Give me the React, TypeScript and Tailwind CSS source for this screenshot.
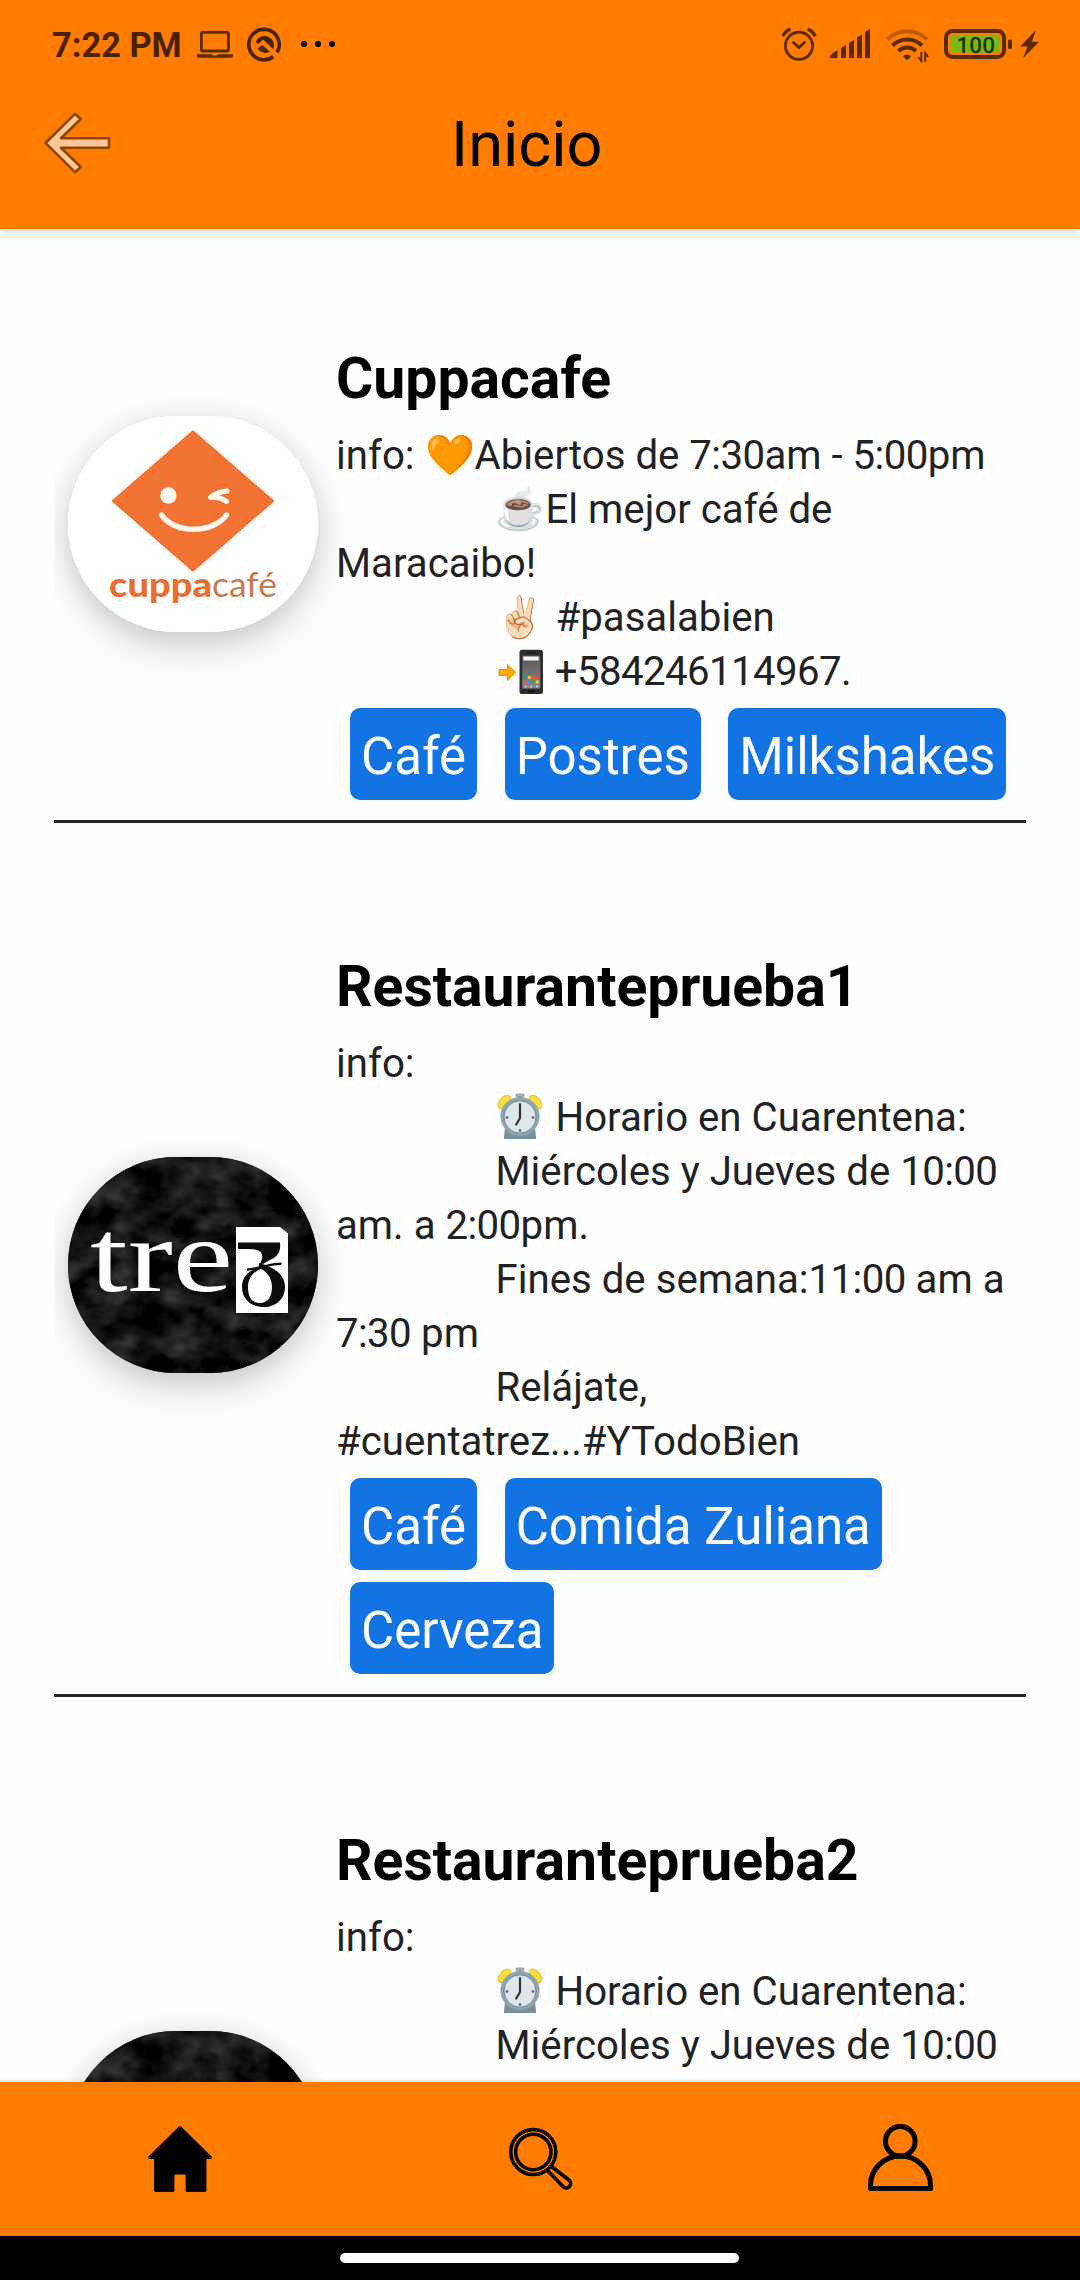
import type { ReactNode } from "react";

const INDENT = " ".repeat(16);

function StatusBar() {
  return (
    <div className="flex h-[88px] items-start justify-between pl-[52px] pr-[40px] text-[#4a2200]">
      <div className="flex items-start">
        <span className="mt-[25px] w-[145px] whitespace-nowrap text-[34.400px] font-bold leading-[40px]">7:22 PM</span>
        <svg className="mt-[26px] h-[36px] w-[150px]" viewBox="197 26 150 36" fill="none">
          <rect x="201.4" y="32.4" width="27" height="18.6" rx="1.5" stroke="#5a2a00" strokeWidth="2.8" />
          <path d="M197 54.2h14.5l1.5 1.2h4l1.5-1.2H233v2a1.6 1.6 0 0 1-1.6 1.6h-32.800a1.600 1.600 0 0 1-1.600-1.600z" fill="#5a2a00" />
          <path d="M273.200 56.700A15.200 15.200 0 1 1 277 52.500" stroke="#4a2200" strokeWidth="3.600" />
          <path d="M255.600 42a9.500 9.500 0 1 1 17.800 7.200l-10.400-9.700-4.500 4.500z" fill="#4a2200" />
          <path d="M257.500 48.500l4.500-3.500 8 6.800a9.500 9.500 0 0 1-12.500-3.300z" fill="#4a2200" />
          <g fill="#000">
            <circle cx="304" cy="44" r="3" />
            <circle cx="318" cy="44" r="3" />
            <circle cx="332" cy="44" r="3" />
          </g>
        </svg>
      </div>
      <svg className="mt-[26px] h-[38px] w-[260px]" viewBox="780 26 260 38" fill="none">
        <g stroke="#5a2a00" strokeWidth="2.800">
          <circle cx="799" cy="45.800" r="13.600" />
          <path d="M793.500 42.500l5.500 5 5.500-5" strokeLinecap="round" />
          <path d="M782.700 36.200q2.300-4.800 7.600-7.200M815.300 36.200q-2.300-4.800-7.600-7.200" strokeWidth="3.200" />
        </g>
        <path
          fill="#5a2a00"
          d="M830 58v-2.500l7.500-5.500v8zM841 58V48l5-3v13zM849 58V43l5-3v18zM857 58V37.500l5-3V58zM865 58V32l5-3v29z"
        />
        <path d="M887.500 39.500a28 28 0 0 1 39.500 0" stroke="#c05c00" strokeWidth="4" />
        <path d="M892.500 45.500a21 21 0 0 1 29.500 0M898.500 51a13 13 0 0 1 17.500 0" stroke="#5a2a00" strokeWidth="4" />
        <path d="M903 56.300q4-3.800 8.200 0l-4.100 3.900z" fill="#5a2a00" />
        <path d="M921.300 52v9l-3-4M925.200 62v-9l3 4" stroke="#5a2a00" strokeWidth="1.900" />
        <rect x="946" y="31" width="58" height="26" rx="6.500" stroke="#5a2a00" strokeWidth="4" />
        <rect x="950.500" y="35.700" width="49" height="16.800" rx="3" fill="#7cb80f" />
        <text x="956.500" y="52.800" fill="#1c3400" fontSize="22.500" fontWeight="500" textLength="38.500">100</text>
        <rect x="1008" y="39.500" width="4" height="9.500" rx="1.500" fill="#5a2a00" />
        <path d="M1036 30l-15.800 16.500h7.300L1023 58.300l16-16.500h-7.200z" fill="#5a2a00" />
      </svg>
    </div>
  );
}

function Header() {
  return (
    <header className="relative z-10 h-[229px] shrink-0 bg-[#ff7c00] shadow-[0_2px_10px_rgba(0,0,0,0.18)]">
      <StatusBar />
      <div className="flex h-[114px] items-center pl-[42px]">
        <svg className="-mt-1 h-[66px] w-[70px]" viewBox="42 110 70 66">
          <path
            d="M45.500 143L75 113.800L80.800 119L61 138.200H109V147.800H61L80.800 167L75 172.200Z"
            fill="#ffc796"
            stroke="#8c4700"
            strokeWidth="2.600"
            strokeLinejoin="round"
          />
        </svg>
        <h1 className="ml-[339px] text-[63px] leading-[74px] text-black">Inicio</h1>
      </div>
    </header>
  );
}

function CuppaLogo() {
  return (
    <svg className="h-[216px] w-[250px]" viewBox="0 0 250 216" fill="none">
      <rect width="250" height="216" fill="#fff" />
      <path d="M125 16l79.500 69L125 154 45.500 85z" fill="#f37334" stroke="#f37334" strokeWidth="3" strokeLinejoin="round" />
      <circle cx="100.500" cy="79.500" r="8.200" fill="#fffaf0" />
      <path d="M159 75q-10 1-16.500 6.500 9-1.500 16 4" stroke="#fffaf0" strokeWidth="5" strokeLinecap="round" strokeLinejoin="round" />
      <path d="M93.500 99c13 19 51 19 65 0" stroke="#fffaf0" strokeWidth="5.400" strokeLinecap="round" />
      <text x="41" y="180.500" fontFamily="Lato" fontSize="35" fontWeight="900" fill="#e66f31" textLength="103" lengthAdjust="spacingAndGlyphs">
        cuppa
      </text>
      <text x="144" y="180.500" fontFamily="Lato" fontSize="35" fill="#c97a4c" textLength="65" lengthAdjust="spacingAndGlyphs">
        café
      </text>
    </svg>
  );
}

function TrezLogo() {
  return (
    <svg className="h-[216px] w-[250px]" viewBox="0 0 250 216" fill="none">
      <defs>
        <filter id="slate" x="0" y="0" width="100%" height="100%" colorInterpolationFilters="sRGB">
          <feTurbulence type="fractalNoise" baseFrequency="0.03 0.04" numOctaves="6" seed="11" />
          <feColorMatrix values="0.4 0.22 0 0 -0.235  0.4 0.22 0 0 -0.235  0.4 0.22 0 0 -0.235  0 0 0 0 1" />
        </filter>
      </defs>
      <rect width="250" height="216" fill="#0b0b0b" />
      <rect width="250" height="216" filter="url(#slate)" />
      <text
        x="22"
        y="134"
        fontFamily="Liberation Serif"
        fontSize="104"
        fill="#fff"
        textLength="143"
        lengthAdjust="spacingAndGlyphs"
      >
        tre
      </text>
      <path d="M168 70h44l8 6.500V156h-52z" fill="#fff" />
      <g fill="#0c0c0c">
        <path d="M170 85.500h42c1 9-2 13-8 16.500-6 3-9 5-13 7 3-6 5-11 1-14.500-4-3-11-2-22-2.500z" />
        <path d="M179 111.500c8 0 22-6 35-6l-1 2.500c-12 0-23 4-34 6z" />
        <path
          fillRule="evenodd"
          d="M191 106c12 3 26 10 26 24 0 12-9 20-21 20-13 0-22-8-22-20 0-10 6-16 17-20zM193 112c-8 3-13 9-13 18 0 10 4 16 12 16s12-7 12-16-5-15-11-18z"
        />
      </g>
    </svg>
  );
}

function AlarmClock() {
  return (
    <svg className="mr-[3px] inline h-[47px] w-[47px] align-[-9px]" viewBox="-0.500 0 47 47" fill="none">
      <ellipse cx="8" cy="9" rx="8" ry="4.800" transform="rotate(-48 8 9)" fill="#fbe03c" stroke="#e6bd2a" />
      <ellipse cx="39" cy="9" rx="8" ry="4.800" transform="rotate(48 39 9)" fill="#fbe03c" stroke="#e6bd2a" />
      <rect x="19" y="0.500" width="9" height="3.500" rx="1" fill="#a9a9a9" />
      <rect x="21.800" y="3" width="3.400" height="4" fill="#80929b" />
      <path d="M8.500 35h30l1.200 11h-32.400z" fill="#78909c" />
      <ellipse cx="23.500" cy="23.500" rx="19.600" ry="19.500" fill="#8fa4ae" />
      <ellipse cx="23.500" cy="24" rx="16" ry="16.200" fill="#dde7eb" stroke="#70868f" />
      <path d="M23.500 11v14l-3.800 6.500" stroke="#333" strokeWidth="2.200" strokeLinecap="round" strokeLinejoin="round" />
      <g fill="#555">
        <circle cx="10.500" cy="24.500" r="1.300" />
        <circle cx="36.500" cy="24.500" r="1.300" />
        <circle cx="23.500" cy="37.500" r="1.300" />
      </g>
    </svg>
  );
}

const appDots = [
  ["#169c6b", 30, 29.5],
  ["#fbc02d", 34, 29.5],
  ["#e8632c", 38, 29.5],
  ["#e0483e", 42, 29.5],
  ["#ea5848", 30, 34],
  ["#4a86e8", 34, 34],
  ["#2fa564", 38, 34],
  ["#fbc94a", 42, 34],
] as const;

function PhoneWithArrow() {
  return (
    <svg className="ml-px mr-[2px] inline h-[47px] w-[47px] align-[-9.500px]" viewBox="0 0 47 47" fill="none">
      <defs>
        <linearGradient id="screen" x1="0" y1="0" x2="0" y2="1">
          <stop offset="0" stopColor="#555" />
          <stop offset="1" stopColor="#8a8a8a" />
        </linearGradient>
      </defs>
      <path d="M2 21.500h8.500v-5l8.500 8-8.500 8v-5H2z" fill="#ffab00" stroke="#e69200" strokeWidth="1" strokeLinejoin="round" />
      <rect x="22.500" y="1.800" width="23.500" height="44.200" rx="2.500" fill="#2e2e2e" />
      <rect x="25.300" y="7.500" width="18" height="33" fill="url(#screen)" />
      <rect x="26.300" y="8.500" width="15.500" height="4" fill="#f5f5f5" />
      <path d="M30.500 4.800h8" stroke="#111" strokeWidth="1.200" />
      <path d="M31 43.400h7" stroke="#111" strokeWidth="2" />
      {appDots.map(([fill, x, y]) => (
        <circle key={`${x}-${y}`} cx={x - 1.700} cy={y} r="1.700" fill={fill} />
      ))}
      <path d="M28 38.500h1.500M33.500 38.500h1.500M39 38.500h1.500" stroke="#eee" strokeWidth="1.500" />
    </svg>
  );
}

/** Digits set slightly tighter than the surrounding words. */
function Num({ children }: { children: string }) {
  return <span className="tracking-[-0.600px]">{children}</span>;
}

type Restaurant = { name: string; info: ReactNode; tags: string[]; logo: ReactNode };

const trezInfo = (
  <>
    {"info:\n" + INDENT}
    <AlarmClock />
    {" Horario en Cuarentena:\n" + INDENT + "Miércoles y Jueves de "}
    <Num>10:00</Num>
    {"\nam. a "}
    <Num>2:00</Num>
    {"pm.\n" + INDENT + "Fines de semana:"}
    <Num>11:00</Num>
    {" am a\n"}
    <Num>7:30</Num>
    {" pm\n" + INDENT + "Relájate,\n#cuentatrez...#YTodoBien"}
  </>
);

const restaurants: Restaurant[] = [
  {
    name: "Cuppacafe",
    info: (
      <>
        {"info: 🧡Abiertos de "}
        <Num>7:30</Num>
        {"am - "}
        <Num>5:00</Num>
        {"pm\n" + INDENT + "☕El mejor café de\nMaracaibo!\n" + INDENT + "✌🏻 #pasalabien\n" + INDENT}
        <PhoneWithArrow />
        <Num>{" +584246114967."}</Num>
      </>
    ),
    tags: ["Café", "Postres", "Milkshakes"],
    logo: <CuppaLogo />,
  },
  { name: "Restauranteprueba1", info: trezInfo, tags: ["Café", "Comida Zuliana", "Cerveza"], logo: <TrezLogo /> },
  { name: "Restauranteprueba2", info: trezInfo, tags: ["Café", "Comida Zuliana", "Cerveza"], logo: <TrezLogo /> },
];

function Card({ name, info, tags, logo }: Restaurant) {
  return (
    <article className="flex shrink-0 items-center border-b-[3px] border-[#222626]">
      <div className="ml-[14px] mt-[13px] h-[216px] w-[250px] shrink-0 overflow-hidden rounded-[108px] shadow-[0_16px_36px_rgba(0,0,0,0.17),0_0px_30px_rgba(0,0,0,0.08)]">
        {logo}
      </div>
      <div className="ml-[18px] min-w-0 flex-1 pb-5 pt-[123px]">
        <h2 className="whitespace-nowrap text-[57.100px] font-bold leading-[81px] text-black">{name}</h2>
        <p className="mt-[10px] whitespace-pre text-[40.200px] leading-[54px] text-[#222]">{info}</p>
        <div className="mt-[9px] flex flex-wrap gap-x-[27.500px] gap-y-3 pl-[14px]">
          {tags.map((tag) => (
            <span key={tag} className="h-[92px] rounded-[10px] bg-[#1273e2] px-[11px] pt-[15px] text-[51px] leading-[68px] text-white">
              {tag}
            </span>
          ))}
        </div>
      </div>
    </article>
  );
}

function TabBar() {
  return (
    <nav className="relative grid h-[154px] shrink-0 grid-cols-3 items-center justify-items-center bg-[#ff7c00] shadow-[0_-2px_3px_rgba(0,0,0,0.06)]">
      <svg className="h-[80px] w-[80px]" viewBox="140 2119 80 80">
        <path
          d="M180 2127.500L210.500 2157.500H205V2190.500H187V2173H173V2190.500H155.500V2157.500H149.500Z"
          stroke="#000"
          strokeWidth="2.800"
          strokeLinejoin="round"
        />
      </svg>
      <svg className="h-[80px] w-[80px]" viewBox="500 2119 80 80" fill="none" stroke="#000" strokeWidth="3.500">
        <circle cx="533.300" cy="2152" r="22.500" />
        <circle cx="533.300" cy="2152" r="17.700" />
        <path d="M547.500 2170.500L563 2186.500a4.300 4.300 0 0 0 6.500-6L551.500 2166.500" strokeLinejoin="round" />
      </svg>
      <svg className="h-[80px] w-[80px]" viewBox="860 2119 80 80" fill="none" stroke="#000" strokeWidth="5">
        <circle cx="900.300" cy="2141.300" r="14.800" />
        <path d="M870.500 2188.500v-3a30 29.500 0 0 1 60 0v3z" strokeLinejoin="round" />
      </svg>
    </nav>
  );
}

export default function App() {
  return (
    <div className="flex h-[2280px] w-[1080px] flex-col overflow-hidden bg-[#fefefe] font-[Roboto,sans-serif]">
      <Header />
      <main className="mx-[54px] flex min-h-0 flex-1 flex-col overflow-hidden">
        <div className="-mt-[14px] flex flex-col">
          {restaurants.map((r) => (
            <Card key={r.name} {...r} />
          ))}
        </div>
      </main>
      <TabBar />
      <div className="flex h-[44px] shrink-0 justify-center bg-black pr-[2px] pt-[17px]">
        <div className="h-[10px] w-[399px] rounded-full bg-white" />
      </div>
    </div>
  );
}
